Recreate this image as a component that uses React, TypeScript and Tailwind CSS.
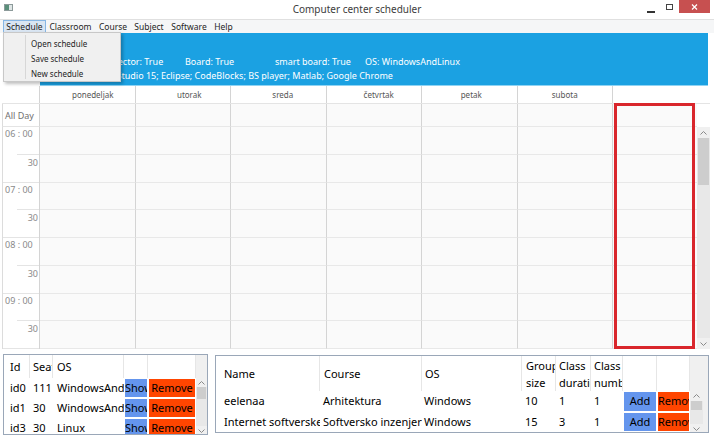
import { useState } from 'react';

interface Room {
  id: string;
  seats: string;
  os: string;
};

interface Subject {
  name: string;
  course: string;
  os: string;
  group: string;
  duration: string;
  number: string;
};

// header labels sit a little right of the column centre in the original
const days = [
  { label: 'ponedeljak', pad: 'pl-[11px]' },
  { label: 'utorak', pad: 'pl-[13px]' },
  { label: 'sreda', pad: 'pl-[9px]' },
  { label: 'četvrtak', pad: 'pl-[10px]' },
  { label: 'petak', pad: 'pl-[4px]' },
  { label: 'subota', pad: 'pl-0' },
];
const slots = ['06 : 00', '30', '07 : 00', '30', '08 : 00', '30', '09 : 00', '30'];
const menus = [
  { label: 'Schedule', w: 'w-[43px]' },
  { label: 'Classroom', w: 'w-[45px]' },
  { label: 'Course', w: 'w-[40px]' },
  { label: 'Subject', w: 'w-[32px]' },
  { label: 'Software', w: 'w-[48px]' },
  { label: 'Help', w: 'w-[21px]' },
];

const rooms: Room[] = [
  { id: 'id0', seats: '111', os: 'WindowsAndLinux' },
  { id: 'id1', seats: '30', os: 'WindowsAndLinux' },
  { id: 'id3', seats: '30', os: 'Linux' },
];

const subjects: Subject[] = [
  { name: 'eelenaa', course: 'Arhitektura', os: 'Windows', group: '10', duration: '1', number: '1' },
  { name: 'Internet softverske arhitekture', course: 'Softversko inzenjerstvo', os: 'Windows', group: '15', duration: '3', number: '1' },
];

const Chevron = ({ down }: { down?: boolean }) => (
  <svg width="7" height="4" viewBox="0 0 7 4" className={down ? 'rotate-180' : ''}>
    <path d="M0.5 3.5 L3.5 0.5 L6.5 3.5" fill="none" stroke="#8a8a8a" strokeWidth="1" />
  </svg>
);

interface ScrollBarProps {
  arrow: string;
  thumb: string;
  width: string;
};

const ScrollBar = ({ arrow, thumb, width }: ScrollBarProps) => (
  <div className={`${width} h-full flex flex-col bg-[#e8e8e8]`}>
    <div className={`${arrow} flex items-center justify-center bg-[#f0f0f0]`}>
      <Chevron />
    </div>
    <div className={`${thumb} mx-[1px] bg-[#cdcdcd]`} />
    <div className="flex-1" />
    <div className={`${arrow} flex items-center justify-center bg-[#f0f0f0]`}>
      <Chevron down />
    </div>
  </div>
);

const GridButton = ({ label, color }: { label: string; color: string }) => (
  <div className={`w-full h-full ${color} overflow-hidden whitespace-nowrap text-center leading-[18px]`}>
    {label}
  </div>
);

const App = () => {
  const [openMenu] = useState('Schedule');

  return (
    <div className="w-[714px] h-[439px] relative overflow-hidden bg-white text-black font-['Noto_Sans',sans-serif]">
      {/* Title bar */}
      <div className="h-[20px] grid grid-cols-[1fr_auto_1fr] border-b border-[#e0e0e0]">
        <div className="flex items-start pl-[4px] pt-[4px]">
          <svg width="9" height="7" viewBox="0 0 9 7">
            <rect x="0.5" y="0.5" width="8" height="6" fill="#dfe6e6" stroke="#8c9a9a" />
            <rect x="1" y="1" width="4" height="5" fill="#5a8f7a" />
          </svg>
        </div>
        <div className="text-[10px] leading-[19px] text-[#3c3c3c]">Computer center scheduler</div>
        <div className="flex items-start justify-end">
          <div className="w-[8px] h-[1.5px] bg-[#333] mt-[11px] mr-[11px]" />
          <div className="w-[7px] h-[6px] border border-[#444] mt-[4px] mr-[6px]" />
          <div className="w-[31px] h-[13px] bg-[#c75050] flex items-center justify-center">
            <svg width="7" height="6" viewBox="0 0 7 6">
              <path d="M1 0.5 L6 5.5 M6 0.5 L1 5.5" stroke="#ffffff" strokeWidth="1.2" />
            </svg>
          </div>
          <div className="w-[4px]" />
        </div>
      </div>

      {/* Menu bar */}
      <div className="h-[13px] flex bg-[#f5f6f7] text-[8.5px] leading-[11px] text-[#1e1e1e]">
        <div className="w-[3px]" />
        {menus.map((m, i) => (
          <div
            key={m.label}
            className={`${m.w} ${i === 1 ? 'ml-[2px]' : ''} text-center border ${
              m.label === openMenu ? 'bg-[#d9e5f2] border-[#86b6e4]' : 'border-transparent'
            }`}
          >
            {m.label}
          </div>
        ))}
      </div>

      {/* Classroom info */}
      <div className="ml-[40px] w-[668px] h-[53px] bg-[#1ba1e2] border-b border-[#8fd3f3] text-white text-[9px] leading-[14px] pt-[22px]">
        <div className="flex whitespace-nowrap">
          <span className="ml-[61px] w-[84px] shrink-0">Projector: True</span>
          <span className="w-[90px] shrink-0">Board: True</span>
          <span className="w-[90px] shrink-0">smart board: True</span>
          <span>OS: WindowsAndLinux</span>
        </div>
        <div className="pl-[7px] whitespace-nowrap">
          Software: Visual Studio 15; Eclipse; CodeBlocks; BS player; Matlab; Google Chrome
        </div>
      </div>

      {/* Calendar */}
      <div className="ml-[2px] w-[708px]">
        <div className="h-[18px] flex border-b border-[#e4e4e4]">
          <div className="w-[38px] border-r border-[#d4d4d4]" />
          {days.map((d) => (
            <div key={d.label} className={`w-[95.5px] ${d.pad} border-r border-[#d4d4d4] text-center text-[8px] leading-[18px] text-[#555]`}>
              {d.label}
            </div>
          ))}
          <div className="flex-1" />
        </div>

        <div className="h-[23px] flex">
          <div className="w-[38px] border-l border-r border-b border-l-[#dcdcdc] border-r-[#d4d4d4] border-b-[#e4e4e4] text-[9px] text-[#707070] pl-[2px] pt-[6px] leading-[12px]">
            All Day
          </div>
          {days.map((d) => (
            <div key={d.label} className="w-[95.5px] bg-[#fafafa] border-r border-b border-r-[#d4d4d4] border-b-[#e8e8e8]" />
          ))}
          <div className="flex-1 bg-[#fafafa] border-b border-[#e8e8e8]" />
          <div className="w-[13px]" />
        </div>

        <div className="h-[222px] flex overflow-hidden">
          <div className="flex-1 flex flex-col">
            {slots.map((s, i) => (
              <div key={i} className="h-[27.75px] shrink-0 flex">
                <div className="w-[38px] border-l border-r border-l-[#dcdcdc] border-r-[#d4d4d4] flex flex-col text-[9px] leading-[12px] text-[#8a8a8a]">
                  <div className={`flex-1 ${i % 2 === 0 ? 'pl-[2px] pt-[1px]' : 'text-right pr-[1px] pt-[2px]'}`}>{s}</div>
                  <div className={`h-px bg-[#e4e4e4] ${i % 2 === 0 ? 'ml-[14px]' : ''}`} />
                </div>
                {days.map((d) => (
                  <div key={d.label} className="w-[95.5px] bg-[#fafafa] border-r border-b border-r-[#d4d4d4] border-b-[#e8e8e8]" />
                ))}
                <div className="flex-1 bg-[#fafafa] border-b border-[#e8e8e8]" />
              </div>
            ))}
          </div>
          <ScrollBar width="w-[13px]" arrow="h-[11px]" thumb="h-[47px]" />
        </div>
      </div>

      {/* Bottom grids */}
      <div className="flex items-start mt-[5px] text-[11px] leading-[14px]">
        {/* Classrooms */}
        <div className="ml-[3px] w-[205px] h-[81px] border border-[#9aa7b8] overflow-hidden">
          <div className="h-[23px] flex items-center whitespace-nowrap">
            <div className="w-[26px] h-full pl-[6px] flex items-center border-r border-[#e6e6e6] overflow-hidden">Id</div>
            <div className="w-[23px] h-full pl-[3px] flex items-center border-r border-[#e6e6e6] overflow-hidden">Seats</div>
            <div className="w-[71px] h-full pl-[4px] flex items-center border-r border-[#e6e6e6] overflow-hidden">OS</div>
            <div className="w-[24px] h-full border-r border-[#e6e6e6]" />
            <div className="w-[48px] h-full border-r border-[#e6e6e6]" />
            <div className="flex-1 h-full bg-[#f0f0f0]" />
          </div>
          <div className="h-[57px] flex">
            <div className="w-[192px] flex flex-col">
              {rooms.map((r) => (
                <div key={r.id} className="h-[20px] shrink-0 flex items-center whitespace-nowrap">
                  <div className="w-[26px] pl-[6px] overflow-hidden">{r.id}</div>
                  <div className="w-[23px] pl-[3px] overflow-hidden">{r.seats}</div>
                  <div className="w-[71px] pl-[4px] overflow-hidden">{r.os}</div>
                  <div className="w-[24px] h-full p-[1px]">
                    <GridButton label="Show" color="bg-[#6495ed]" />
                  </div>
                  <div className="w-[48px] h-full p-[1px]">
                    <GridButton label="Remove" color="bg-[#ff4500]" />
                  </div>
                </div>
              ))}
            </div>
            <ScrollBar width="w-[11px]" arrow="h-[9px]" thumb="h-[12px]" />
          </div>
        </div>

        {/* Subjects */}
        <div className="ml-[7px] mt-[1px] w-[494px] h-[78px] border border-[#9aa7b8] overflow-hidden">
          <div className="h-[35px] flex whitespace-nowrap">
            <div className="w-[104px] pl-[8px] flex items-center border-r border-[#e6e6e6]">Name</div>
            <div className="w-[102px] pl-[4px] flex items-center border-r border-[#e6e6e6]">Course</div>
            <div className="w-[100px] pl-[3px] flex items-center border-r border-[#e6e6e6]">OS</div>
            <div className="w-[34px] pl-[4px] flex flex-col justify-center leading-[17px] border-r border-[#e6e6e6] overflow-hidden">
              <span>Group</span>
              <span>size</span>
            </div>
            <div className="w-[35px] pl-[3px] flex flex-col justify-center leading-[17px] border-r border-[#e6e6e6] overflow-hidden">
              <span>Class</span>
              <span>duration</span>
            </div>
            <div className="w-[32px] pl-[3px] flex flex-col justify-center leading-[17px] border-r border-[#e6e6e6] overflow-hidden">
              <span>Class</span>
              <span>number</span>
            </div>
            <div className="w-[34px] border-r border-[#e6e6e6]" />
            <div className="w-[33px] border-r border-[#e6e6e6]" />
            <div className="flex-1 bg-[#f0f0f0]" />
          </div>
          <div className="h-[43px] flex">
            <div className="w-[474px] flex flex-col">
              {subjects.map((s) => (
                <div key={s.name} className="h-[20.5px] shrink-0 flex items-center whitespace-nowrap">
                  <div className="w-[104px] pl-[8px] overflow-hidden">{s.name}</div>
                  <div className="w-[102px] pl-[3px] overflow-hidden">{s.course}</div>
                  <div className="w-[100px] pl-[2px] overflow-hidden">{s.os}</div>
                  <div className="w-[34px] pl-[3px] overflow-hidden">{s.group}</div>
                  <div className="w-[35px] pl-[3px] overflow-hidden">{s.duration}</div>
                  <div className="w-[32px] pl-[3px] overflow-hidden">{s.number}</div>
                  <div className="w-[34px] h-full p-[1px]">
                    <GridButton label="Add" color="bg-[#6495ed]" />
                  </div>
                  <div className="w-[33px] h-full p-[1px]">
                    <GridButton label="Remove" color="bg-[#ff4500]" />
                  </div>
                </div>
              ))}
            </div>
            <div className="w-[13px] h-full">
              <ScrollBar width="w-[13px]" arrow="h-[10px]" thumb="h-[9px]" />
            </div>
            <div className="flex-1 bg-[#f0f0f0]" />
          </div>
        </div>
      </div>

      {/* Schedule menu dropdown */}
      <div className="absolute left-[3px] top-[32px] w-[118px] h-[50px] bg-[#f0f0f0] border border-[#c8c8c8] shadow-[2px_2px_3px_rgba(0,0,0,0.25)] flex">
        <div className="w-[22px] my-[2px] border-r border-[#d7d7d7]" />
        <div className="flex-1 pt-[3px] pl-[5px] text-[8px] leading-[15px] text-[#1e1e1e]">
          <div>Open schedule</div>
          <div>Save schedule</div>
          <div>New schedule</div>
        </div>
      </div>

      {/* Highlight annotation */}
      <div className="absolute left-[614px] top-[103px] w-[81px] h-[246px] border-[3px] border-[#d9262c]" />
    </div>
  );
};

export default App;
